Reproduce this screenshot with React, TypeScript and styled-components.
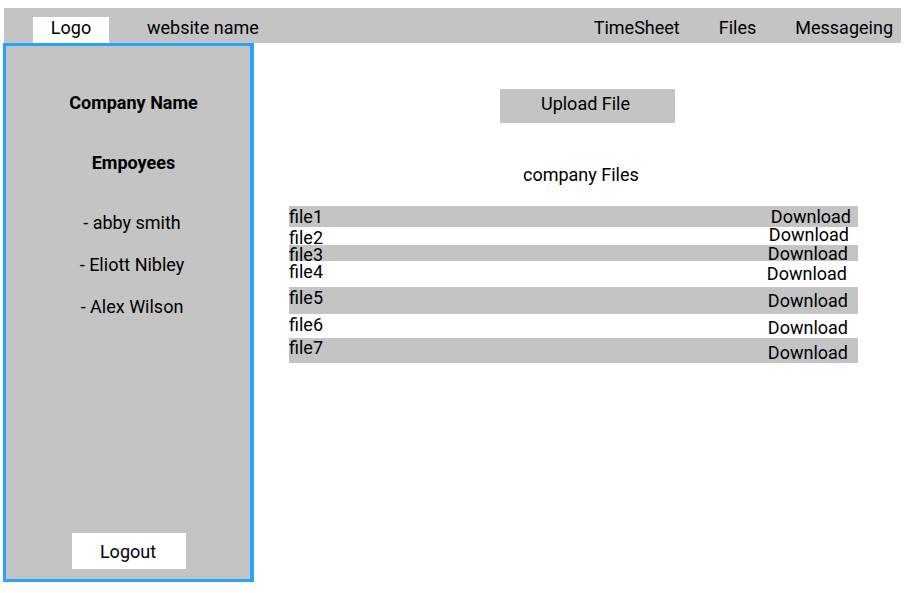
import React from "react";
import styled, { createGlobalStyle } from "styled-components";

const GlobalStyle = createGlobalStyle`
  html, body { margin: 0; padding: 0; background: #ffffff; }
  body { font-family: Roboto, "Liberation Sans", Arial, sans-serif; color: #000; }
  * { box-sizing: border-box; }
`;

const Page = styled.div`
  width: 910px;
  height: 593px;
  padding: 8px 0 0 3px;
  display: flex;
  flex-direction: column;
  font-size: 18px;
  line-height: 21px;
`;

const Header = styled.header`
  height: 35px;
  width: 897px;
  margin-left: 1px;
  background: #c4c4c4;
  display: flex;
  align-items: flex-start;
  padding-top: 9px;
`;

const LogoBox = styled.div`
  margin-left: 29px;
  width: 76px;
  height: 26px;
  background: #ffffff;
  text-align: center;
`;

const SiteName = styled.div`
  margin-left: 38px;
`;

const Nav = styled.nav`
  margin-left: auto;
  padding-right: 8px;
  display: flex;
  gap: 39px;
`;

const NavItem = styled.span``;

const Body = styled.div`
  display: flex;
  flex: 1;
  min-height: 0;
`;

const Sidebar = styled.aside`
  width: 251px;
  height: 539px;
  border: 3px solid #27a3f7;
  border-right-width: 4px;
  background: #c4c4c4;
  display: flex;
  flex-direction: column;
  align-items: center;
  padding-top: 46px;
`;

const SideText = styled.div<{ $bold?: boolean; $gap: number }>`
  margin-top: ${(p) => p.$gap}px;
  padding-left: ${(p) => (p.$bold ? 11 : 8)}px;
  font-weight: ${(p) => (p.$bold ? 700 : 400)};
`;

const LogoutButton = styled.div`
  margin-top: auto;
  margin-bottom: 10px;
  margin-left: 2px;
  width: 114px;
  height: 36px;
  background: #ffffff;
  text-align: center;
  padding: 8px 2px 0 0;
`;

const Main = styled.main`
  flex: 1;
  padding: 46px 0 0 35px;
  display: flex;
  flex-direction: column;
`;

const UploadButton = styled.div`
  margin-left: 211px;
  width: 175px;
  height: 34px;
  background: #c4c4c4;
  text-align: center;
  padding: 4px 4px 0 0;
`;

const Title = styled.div`
  margin: 41px 0 0 234px;
`;

const FileList = styled.div`
  display: block;
  margin-top: 21px;
  width: 569px;
`;

const FileRow = styled.div<{ $h: number; $shade: boolean }>`
  height: ${(p) => p.$h}px;
  background: ${(p) => (p.$shade ? "#c4c4c4" : "transparent")};
  display: flex;
  justify-content: space-between;
  align-items: flex-start;
`;

const FileName = styled.span<{ $top: number }>`
  margin-top: ${(p) => p.$top}px;
`;

const DownloadLabel = styled.span<{ $top: number; $right: number }>`
  margin-top: ${(p) => p.$top}px;
  margin-right: ${(p) => p.$right}px;
`;

const files = [
  { name: "file1", h: 21, shade: true, ft: 0, dt: 0, dr: 7 },
  { name: "file2", h: 18, shade: false, ft: 0, dt: -3, dr: 9 },
  { name: "file3", h: 16, shade: true, ft: -1, dt: -2, dr: 10 },
  { name: "file4", h: 26, shade: false, ft: 0, dt: 2, dr: 11 },
  { name: "file5", h: 27, shade: true, ft: 0, dt: 3, dr: 10 },
  { name: "file6", h: 24, shade: false, ft: 0, dt: 3, dr: 10 },
  { name: "file7", h: 25, shade: true, ft: -1, dt: 4, dr: 10 },
];

export default function App() {
  return (
    <>
      <GlobalStyle />
      <Page>
        <Header>
          <LogoBox>Logo</LogoBox>
          <SiteName>website name</SiteName>
          <Nav>
            <NavItem>TimeSheet</NavItem>
            <NavItem>Files</NavItem>
            <NavItem>Messageing</NavItem>
          </Nav>
        </Header>
        <Body>
          <Sidebar>
            <SideText $bold $gap={0}>Company Name</SideText>
            <SideText $bold $gap={39}>Empoyees</SideText>
            <SideText $gap={39}>- abby smith</SideText>
            <SideText $gap={21}>- Eliott Nibley</SideText>
            <SideText $gap={21}>- Alex Wilson</SideText>
            <LogoutButton>Logout</LogoutButton>
          </Sidebar>
          <Main>
            <UploadButton>Upload File</UploadButton>
            <Title>company Files</Title>
            <FileList>
              {files.map((f) => (
                <FileRow key={f.name} $h={f.h} $shade={f.shade}>
                  <FileName $top={f.ft}>{f.name}</FileName>
                  <DownloadLabel $top={f.dt} $right={f.dr}>Download</DownloadLabel>
                </FileRow>
              ))}
            </FileList>
          </Main>
        </Body>
      </Page>
    </>
  );
}
